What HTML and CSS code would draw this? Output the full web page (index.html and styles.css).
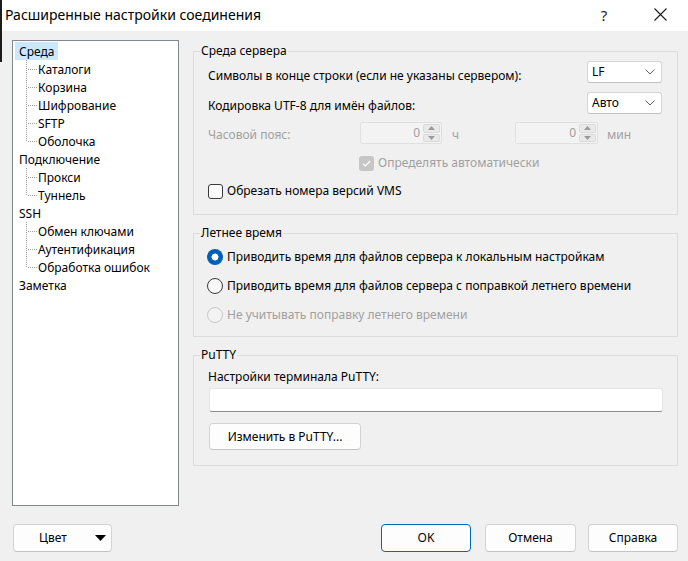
FILE: index.html
```html
<!DOCTYPE html>
<html lang="ru">
<head>
<meta charset="utf-8">
<title>Расширенные настройки соединения</title>
<link rel="stylesheet" href="styles.css">
</head>
<body>
<div class="window">
  <header class="titlebar">
    <span class="title">Расширенные настройки соединения</span>
    <span class="help">?</span>
    <span class="close"><svg width="13" height="13" viewBox="0 0 13 13"><path d="M0.5 0.5 L12.5 12.5 M12.5 0.5 L0.5 12.5" stroke="#1a1a1a" stroke-width="1.1" fill="none"/></svg></span>
  </header>

  <main class="content">
    <nav class="tree">
      <div class="node"><span class="node-label selected">Среда</span></div>
      <div class="children">
        <div class="child">Каталоги</div>
        <div class="child">Корзина</div>
        <div class="child">Шифрование</div>
        <div class="child">SFTP</div>
        <div class="child">Оболочка</div>
      </div>
      <div class="node"><span class="node-label">Подключение</span></div>
      <div class="children">
        <div class="child">Прокси</div>
        <div class="child">Туннель</div>
      </div>
      <div class="node"><span class="node-label">SSH</span></div>
      <div class="children">
        <div class="child">Обмен ключами</div>
        <div class="child">Аутентификация</div>
        <div class="child">Обработка ошибок</div>
      </div>
      <div class="node"><span class="node-label">Заметка</span></div>
    </nav>

    <section class="panel">
      <fieldset class="group g-server">
        <legend>Среда сервера</legend>
        <div class="group-body">
          <div class="row r-eol">
            <span class="lbl">Символы в конце строки (если не указаны сервером):</span>
            <div class="combo"><span class="combo-text">LF</span><svg class="chev" width="10" height="6" viewBox="0 0 10 6"><path d="M0.5 0.5 L5 5 L9.5 0.5" fill="none" stroke="#5f5f5f" stroke-width="1"/></svg></div>
          </div>
          <div class="row r-enc">
            <span class="lbl">Кодировка UTF-8 для имён файлов:</span>
            <div class="combo"><span class="combo-text">Авто</span><svg class="chev" width="10" height="6" viewBox="0 0 10 6"><path d="M0.5 0.5 L5 5 L9.5 0.5" fill="none" stroke="#5f5f5f" stroke-width="1"/></svg></div>
          </div>
          <div class="row r-tz">
            <span class="lbl tz-lbl disabled">Часовой пояс:</span>
            <div class="spin spin-h">
              <span class="spin-val">0</span>
              <span class="spin-btns">
                <span class="spin-btn"><svg width="7" height="4" viewBox="0 0 7 4"><path d="M0 4 L3.5 0 L7 4 Z" fill="#9a9a9a"/></svg></span>
                <span class="spin-btn"><svg width="7" height="4" viewBox="0 0 7 4"><path d="M0 0 L3.5 4 L7 0 Z" fill="#9a9a9a"/></svg></span>
              </span>
            </div>
            <span class="unit unit-h disabled">ч</span>
            <div class="spin spin-m">
              <span class="spin-val">0</span>
              <span class="spin-btns">
                <span class="spin-btn"><svg width="7" height="4" viewBox="0 0 7 4"><path d="M0 4 L3.5 0 L7 4 Z" fill="#9a9a9a"/></svg></span>
                <span class="spin-btn"><svg width="7" height="4" viewBox="0 0 7 4"><path d="M0 0 L3.5 4 L7 0 Z" fill="#9a9a9a"/></svg></span>
              </span>
            </div>
            <span class="unit unit-m disabled">мин</span>
          </div>
          <div class="row r-auto">
            <span class="check check-dis"><svg width="15" height="15" viewBox="0 0 15 15"><path d="M3.8 7.6 L6.3 10 L11.2 5" fill="none" stroke="#ffffff" stroke-width="1.2"/></svg></span>
            <span class="check-lbl disabled">Определять автоматически</span>
          </div>
          <div class="row r-vms">
            <span class="check"></span>
            <span class="check-lbl">Обрезать номера версий VMS</span>
          </div>
        </div>
      </fieldset>

      <fieldset class="group g-dst">
        <legend>Летнее время</legend>
        <div class="group-body">
          <div class="row radio-row rr1">
            <span class="radio on"></span>
            <span class="radio-lbl">Приводить время для файлов сервера к локальным настройкам</span>
          </div>
          <div class="row radio-row rr2">
            <span class="radio"></span>
            <span class="radio-lbl">Приводить время для файлов сервера с поправкой летнего времени</span>
          </div>
          <div class="row radio-row rr3">
            <span class="radio radio-dis"></span>
            <span class="radio-lbl disabled">Не учитывать поправку летнего времени</span>
          </div>
        </div>
      </fieldset>

      <fieldset class="group g-putty">
        <legend>PuTTY</legend>
        <div class="group-body">
          <div class="putty-lbl">Настройки терминала PuTTY:</div>
          <div class="textbox"></div>
          <button class="btn btn-putty">Изменить в PuTTY...</button>
        </div>
      </fieldset>
    </section>
  </main>

  <footer class="footer">
    <button class="btn btn-color"><span class="color-text">Цвет</span><svg width="11" height="6" viewBox="0 0 11 6"><path d="M0 0 H11 L5.5 6 Z" fill="#000"/></svg></button>
    <button class="btn btn-ok">OK</button>
    <button class="btn btn-cancel">Отмена</button>
    <button class="btn btn-help">Справка</button>
  </footer>
</div>
</body>
</html>
```

FILE: styles.css
```css
* { box-sizing: border-box; }

html, body { margin: 0; padding: 0; }

body {
  width: 688px;
  height: 561px;
  overflow: hidden;
  background: #f0f0f0;
  color: #000;
  font-family: "Noto Sans", "Segoe UI", "Liberation Sans", sans-serif;
  font-size: 12px;
  line-height: 16px;
}

.window {
  position: relative;
  height: 561px;
  display: flex;
  flex-direction: column;
}

.window::before {
  content: "";
  position: absolute;
  left: 0;
  top: 0;
  width: 2px;
  height: 62px;
  background: #1c1c1c;
}

/* ---------- title bar ---------- */
.titlebar {
  flex: none;
  height: 31px;
  background: #ffffff;
  display: flex;
  align-items: center;
  padding: 0 21px 0 5px;
}

.title {
  flex: 1;
  font-size: 14px;
  line-height: 20px;
  margin-top: -2px;
}

.help {
  width: 16px;
  text-align: center;
  font-size: 15px;
  line-height: 20px;
  margin-right: 42px;
  margin-top: -2px;
  color: #1a1a1a;
}

.close { display: flex; margin-top: -2px; }

/* ---------- content ---------- */
.content {
  flex: none;
  display: flex;
  padding: 9px 10px 0 12px;
}

.tree {
  flex: none;
  width: 167px;
  height: 466px;
  background: #ffffff;
  border: 1px solid #828790;
  padding-top: 1px;
}

.node {
  height: 18px;
  display: flex;
  padding-left: 2px;
}

.node-label {
  height: 18px;
  line-height: 19px;
  padding: 0 4px;
}

.node-label.selected { background: #cce8ff; }

.child {
  height: 18px;
  line-height: 19px;
  padding-left: 25px;
  background-image:
    repeating-linear-gradient(to bottom, #a0a0a0 0 1px, transparent 1px 2px),
    repeating-linear-gradient(to right, #a0a0a0 0 1px, transparent 1px 2px);
  background-size: 1px 18px, 9px 1px;
  background-position: 13px 0, 15px 9px;
  background-repeat: no-repeat;
}

.child:last-child { background-size: 1px 10px, 9px 1px; }

/* ---------- panel & groups ---------- */
.panel {
  flex: none;
  margin-left: 14px;
  width: 485px;
  display: flex;
  flex-direction: column;
}

.group {
  margin: 0;
  padding: 0;
  min-width: 0;
  border: 1px solid #dcdcdc;
}

.group legend {
  margin-left: 6px;
  padding: 0 1px;
  line-height: 16px;
}

.g-server { margin-top: 3px; }
.g-dst { margin-top: 10px; }
.g-putty { margin-top: 10px; }

.group-body { padding: 0 15px 0 14px; }

.disabled { color: #a0a0a0; }

.row { display: flex; align-items: flex-start; }

/* server group */
.g-server .group-body { padding-bottom: 15px; }

.r-eol { margin-top: 2px; justify-content: space-between; }
.r-enc { margin-top: 8px; justify-content: space-between; }
.r-eol .lbl { margin-top: 7px; }
.r-enc .lbl { margin-top: 6px; }

.combo {
  width: 75px;
  height: 22px;
  background: #ffffff;
  border: 1px solid #d5d5d5;
  border-bottom-color: #c2c2c2;
  border-radius: 3px;
  display: flex;
  align-items: center;
  justify-content: space-between;
  padding: 0 6px 0 4px;
}

.r-tz { margin-top: 8px; }
.tz-lbl { width: 152px; margin-top: 5px; }

.spin {
  height: 22px;
  border: 1px solid #e0e0e0;
  border-radius: 2px;
  background: #f3f3f3;
  display: flex;
  align-items: stretch;
  padding: 1px 1px 1px 0;
}

.spin-h { width: 82px; }
.spin-m { width: 83px; }

.spin-val {
  flex: 1;
  text-align: right;
  color: #a0a0a0;
  padding-right: 3px;
  line-height: 18px;
}

.spin-btns {
  width: 17px;
  display: flex;
  flex-direction: column;
  gap: 1px;
}

.spin-btn {
  flex: 1;
  display: flex;
  align-items: center;
  justify-content: center;
  background: #e9e9e9;
  border: 1px solid #dadada;
  border-radius: 2px;
}

.unit { margin-top: 5px; }
.unit-h { width: 73px; padding-left: 10px; }
.unit-m { padding-left: 9px; }

.r-auto {
  margin-top: 11px;
  height: 16px;
  align-items: center;
  padding-left: 151px;
}

.r-vms {
  margin-top: 12px;
  height: 16px;
  align-items: center;
}

.check {
  flex: none;
  width: 15px;
  height: 15px;
  border: 1px solid #3a3a3a;
  border-radius: 3px;
  background: #fbfbfb;
  display: flex;
}

.check-dis {
  border: none;
  background: #c6c6c6;
}

.check-lbl { margin-left: 4px; }

/* DST group */
.g-dst .group-body { padding-left: 13px; padding-bottom: 13px; }

.radio-row { height: 16px; align-items: center; }
.rr1 { margin-top: 8px; }
.rr2 { margin-top: 13px; }
.rr3 { margin-top: 13px; }

.radio {
  flex: none;
  width: 16px;
  height: 16px;
  border-radius: 50%;
  border: 1px solid #3a3a3a;
  background: #f7f7f7;
}

.radio.on {
  border: none;
  background: radial-gradient(circle at 8px 8px, #ffffff 0 3.2px, #005fb8 3.8px);
}

.radio.radio-dis {
  border-color: #c9c9c9;
  background: #f3f3f3;
}

.radio-lbl { margin-left: 4px; }

/* PuTTY group */
.g-putty .group-body { padding-bottom: 15px; }

.putty-lbl { margin-top: 6px; }

.textbox {
  margin-top: 3px;
  margin-left: 1px;
  width: 454px;
  height: 24px;
  background: #ffffff;
  border: 1px solid #e5e5e5;
  border-bottom-color: #8a8a8a;
  border-radius: 3px;
}

/* ---------- buttons ---------- */
.btn {
  height: 28px;
  margin: 0;
  padding: 0;
  font: inherit;
  color: #000;
  background: #fdfdfd;
  border: 1px solid #d3d3d3;
  border-bottom-color: #c4c4c4;
  border-radius: 4px;
  display: flex;
  align-items: center;
  justify-content: center;
}

.btn-putty {
  margin-top: 11px;
  margin-left: 1px;
  width: 152px;
  height: 27px;
}

.footer {
  flex: none;
  display: flex;
  padding: 18px 10px 0 13px;
}

.btn-color {
  width: 99px;
  justify-content: flex-start;
  padding: 0 5px 0 25px;
}

.btn-color .color-text { flex: 1; text-align: left; }

.btn-ok {
  margin-left: auto;
  width: 90px;
  border: 1px solid #0067c0;
}

.btn-cancel { margin-left: 14px; width: 91px; }
.btn-help { margin-left: 12px; width: 90px; }
```
